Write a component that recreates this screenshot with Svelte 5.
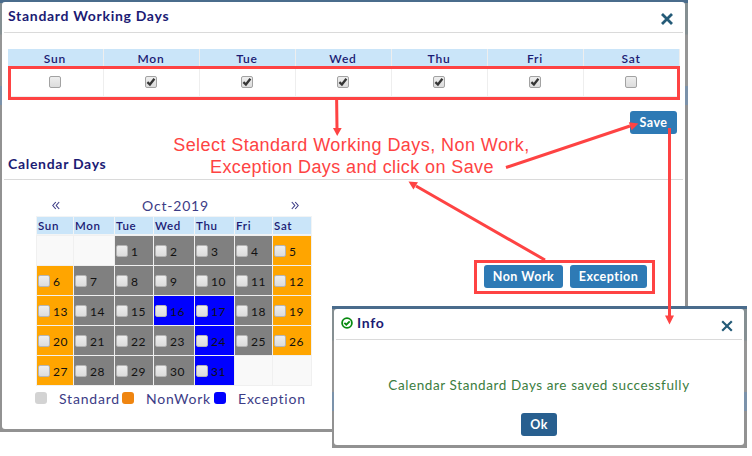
<script>
  const weekdays = ['Sun', 'Mon', 'Tue', 'Wed', 'Thu', 'Fri', 'Sat'];
  const working = [false, true, true, true, true, true, false];
  const exceptions = [16, 17, 24, 31];

  // October 2019 starts on a Tuesday
  const cells = Array.from({ length: 35 }, (_, i) => {
    const day = i - 1;
    if (day < 1 || day > 31) return { day: null, kind: 'empty' };
    if (exceptions.includes(day)) return { day, kind: 'exception' };
    if (i % 7 === 0 || i % 7 === 6) return { day, kind: 'nonwork' };
    return { day, kind: 'standard' };
  });
</script>

<div class="stage">
  <section class="window main">
    <div class="body">
      <header class="head first">
        <h2>Standard Working Days</h2>
        <svg class="close" width="14" height="14" viewBox="0 0 14 14"><path d="M2 2L12 12M12 2L2 12" /></svg>
      </header>

      <div class="week">
        {#each weekdays as name, i}
          <div class="col">
            <div class="colname">{name}</div>
            <div class="colbox">
              <span class="check">
                {#if working[i]}
                  <svg width="10" height="10" viewBox="0 0 10 10"><path d="M1.4 5.2L3.9 7.5L8.4 1.8" /></svg>
                {/if}
              </span>
            </div>
          </div>
        {/each}
      </div>

      <div class="saverow"><button class="save">Save</button></div>

      <header class="head second"><h2>Calendar Days</h2></header>

      <div class="content">
        <div class="calendar">
          <div class="nav">
            <svg width="8" height="9" viewBox="0 0 8 9"><path d="M3.8 1L.8 4.5L3.8 8M7.2 1L4.2 4.5L7.2 8" /></svg>
            <span class="month">Oct-2019</span>
            <svg width="8" height="9" viewBox="0 0 8 9"><path d="M.8 1L3.8 4.5L.8 8M4.2 1L7.2 4.5L4.2 8" /></svg>
          </div>
          <div class="grid names">
            {#each weekdays as name}<div>{name}</div>{/each}
          </div>
          <div class="grid days">
            {#each cells as cell}
              <div class="cell {cell.kind}">
                {#if cell.day}<span class="check"></span><span>{cell.day}</span>{/if}
              </div>
            {/each}
          </div>
          <div class="legend">
            <i class="sw grey"></i><span class="l1">Standard</span>
            <i class="sw orange"></i><span class="l2">NonWork</span>
            <i class="sw blue"></i><span class="l3">Exception</span>
          </div>
        </div>
        <div class="actions">
          <button class="nw">Non Work</button>
          <button class="ex">Exception</button>
        </div>
      </div>
    </div>
  </section>

  <section class="window info">
    <div class="body">
      <header class="head third">
        <svg class="ok" width="12" height="12" viewBox="0 0 12 12"><circle cx="6" cy="6" r="4.9" /><path d="M3.4 5.9L5.3 7.7L8.7 4.3" /></svg>
        <h2>Info</h2>
        <svg class="close thin" width="14" height="14" viewBox="0 0 14 14"><path d="M2.2 2.2L11.8 11.8M11.8 2.2L2.2 11.8" /></svg>
      </header>
      <p>Calendar Standard Days are saved successfully</p>
      <button class="okbtn">Ok</button>
    </div>
  </section>

  <svg class="notes" width="752" height="456" viewBox="0 0 752 456">
    <g class="lines">
      <rect x="9.5" y="67.5" width="669" height="31" />
      <rect x="475.5" y="261.5" width="178" height="31" />
      <path d="M336.6 97L337 128M506 167.5L630 126M545 260L416 186M669.5 128V316" />
    </g>
    <g class="heads">
      <path d="M333 128H341.7L337.2 136Z" />
      <path d="M638.5 123.5L628.8 122.2L631.6 130.3Z" />
      <path d="M408.5 181.5L418 182.2L413.4 189.6Z" />
      <path d="M665 315.5H674L669.5 324.5Z" />
    </g>
    <text x="173.2" y="151" textLength="356">Select Standard Working Days, Non Work,</text>
    <text x="210" y="173" textLength="283.5">Exception Days and click on Save</text>
  </svg>
</div>

<style>
  :global(body) { background: #fff; }
  .stage {
    position: relative;
    width: 752px;
    height: 456px;
    overflow: hidden;
    background: #fff;
    font-family: Lato, 'Liberation Sans', sans-serif;
    color: #1b1b74;
  }
  .stage * { box-sizing: border-box; }
  .window {
    display: flex;
    background: linear-gradient(#4a6c8c 0 3px, #858f92 3px 34px, #969696 35px 86px, #7b92aa 86px 105px, #929292 105px);
  }
  .main { width: 688px; height: 432px; padding: 2px 3px 3px 2px; }
  .info {
    position: absolute;
    left: 332px;
    top: 306px;
    width: 415px;
    height: 142px;
    padding: 3px 3px 3px 2px;
  }
  .body {
    flex: 1;
    display: flex;
    flex-direction: column;
    background: #fff;
    border-radius: 3px;
  }
  .head {
    display: flex;
    align-items: center;
    margin: 0 2px;
    border-bottom: 1px solid #dadada;
  }
  h2 { margin: 0; font-size: 14px; line-height: 18px; font-weight: 700; letter-spacing: .7px; }
  .first { height: 31px; padding: 0 9px 3px 4px; }
  .close { margin: 6px 0 0 auto; fill: none; stroke: #245b78; stroke-width: 2.8; }
  .thin { stroke-width: 2.2; }
  .week { display: flex; width: 672px; height: 49px; margin: 16px 0 0 6px; }
  .col { width: 96px; display: flex; flex-direction: column; border-right: 1px solid #eee; }
  .colname {
    height: 18px;
    line-height: 19px;
    background: #cae5f9;
    text-align: center;
    font-size: 12px;
    font-weight: 600;
    letter-spacing: .8px;
    padding-right: 1px;
  }
  .colbox { height: 30px; border-bottom: 1px solid #eee; display: flex; justify-content: center; align-items: center; padding: 1px 2px 0 0; }
  .check {
    display: flex;
    align-items: center;
    justify-content: center;
    flex: none;
    width: 12px;
    height: 12px;
    border: 1px solid #a2a2a2;
    border-radius: 2px;
    background: linear-gradient(#eee, #dcdcdc);
  }
  .check svg { flex: none; fill: none; stroke: #353535; stroke-width: 2.3; }
  .saverow { display: flex; justify-content: flex-end; padding: 13px 8px 0 0; }
  button {
    height: 23px;
    border: 0;
    border-radius: 3px;
    padding: 0;
    background: #2e7ab5;
    color: #fff;
    font: 700 12.5px/23px Lato, sans-serif;
    letter-spacing: .5px;
  }
  .save { width: 47px; }
  .second { height: 46px; padding: 14px 0 0 4px; }
  .content { display: flex; }
  .calendar { width: 276px; margin: 14px 0 0 34px; }
  .nav { display: flex; align-items: center; height: 22px; padding: 0 13px 0 16px; justify-content: space-between; }
  .nav svg { fill: none; stroke: #3c3c86; stroke-width: 1.1; }
  .month { font-size: 14px; letter-spacing: .8px; color: #3c3c86; }
  .grid { display: grid; grid-template-columns: 36px 40px 38px 40px 39px 37px 38px; gap: 1px; background: #f0f0f0; padding: 0 1px 1px; width: 276px; }
  .names { height: 19px; padding-top: 1px; background: #f2f4f5; }
  .names div { background: #cae5f9; font-size: 11.5px; font-weight: 600; line-height: 17px; letter-spacing: .7px; padding-left: 1px; }
  .days { grid-auto-rows: 29px; padding-top: 1px; }
  .cell { display: flex; align-items: center; padding: 1px 0 0 1px; gap: 3px; font-size: 12px; letter-spacing: .6px; color: #111; }
  .cell .check { border-color: #b5b5b5; }
  .empty { background: #f9f9f9; }
  .standard { background: #808080; }
  .nonwork { background: #ffa500; }
  .exception { background: #00f; }
  .legend { display: flex; align-items: center; height: 22px; font-size: 14px; letter-spacing: .8px; color: #3c3c86; white-space: nowrap; margin: 1px 0 0 -1px; }
  .sw { flex: none; width: 12px; height: 12px; border-radius: 3px; }
  .grey { background: #d3d3d3; }
  .orange { background: #ef8510; }
  .blue { background: #00f; }
  .l1 { margin-left: 12px; width: 63px; }
  .l2 { margin-left: 12px; width: 68px; }
  .l3 { margin-left: 12px; }
  .actions { display: flex; margin: 85px 0 0 172px; gap: 7px; }
  .nw { width: 79px; }
  .ex { width: 77px; }
  .info .body { align-items: center; }
  .third { align-self: stretch; height: 31px; padding: 0 8px 2px 5px; }
  .ok { fill: none; stroke: #088a10; stroke-width: 1.8; margin-right: 4px; }
  p { margin: 36px 0 0; font-size: 13.5px; line-height: 18px; letter-spacing: .6px; color: #3b7d40; white-space: nowrap; }
  .okbtn { margin-top: 19px; width: 36px; background: #285f8f; }
  .notes { position: absolute; left: 0; top: 0; }
  .lines { fill: none; stroke: #fe4343; stroke-width: 3; }
  .heads { fill: #fe4343; }
  text { font: 18px 'Liberation Sans', Arial, sans-serif; fill: #fe4343; }
</style>
